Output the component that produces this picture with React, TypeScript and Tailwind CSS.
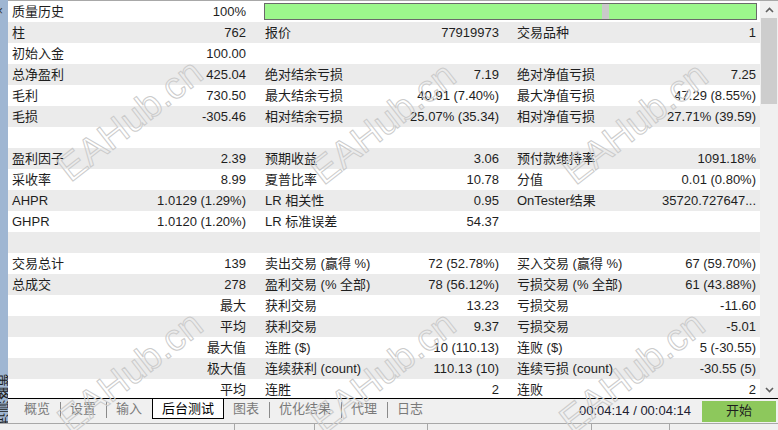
import React from 'react';

type Cell = [string, string] | null;

const rows: Cell[][] = [
  [['柱', '762'], ['报价', '77919973'], ['交易品种', '1']],
  [['初始入金', '100.00'], null, null],
  [['总净盈利', '425.04'], ['绝对结余亏损', '7.19'], ['绝对净值亏损', '7.25']],
  [['毛利', '730.50'], ['最大结余亏损', '40.91 (7.40%)'], ['最大净值亏损', '47.29 (8.55%)']],
  [['毛损', '-305.46'], ['相对结余亏损', '25.07% (35.34)'], ['相对净值亏损', '27.71% (39.59)']],
  [null, null, null],
  [['盈利因子', '2.39'], ['预期收益', '3.06'], ['预付款维持率', '1091.18%']],
  [['采收率', '8.99'], ['夏普比率', '10.78'], ['分值', '0.01 (0.80%)']],
  [['AHPR', '1.0129 (1.29%)'], ['LR 相关性', '0.95'], ['OnTester结果', '35720.727647...']],
  [['GHPR', '1.0120 (1.20%)'], ['LR 标准误差', '54.37'], null],
  [null, null, null],
  [['交易总计', '139'], ['卖出交易 (赢得 %)', '72 (52.78%)'], ['买入交易 (赢得 %)', '67 (59.70%)']],
  [['总成交', '278'], ['盈利交易 (% 全部)', '78 (56.12%)'], ['亏损交易 (% 全部)', '61 (43.88%)']],
  [['', '最大'], ['获利交易', '13.23'], ['亏损交易', '-11.60']],
  [['', '平均'], ['获利交易', '9.37'], ['亏损交易', '-5.01']],
  [['', '最大值'], ['连胜 ($)', '10 (110.13)'], ['连败 ($)', '5 (-30.55)']],
  [['', '极大值'], ['连续获利 (count)', '110.13 (10)'], ['连续亏损 (count)', '-30.55 (5)']],
  [['', '平均'], ['连胜', '2'], ['连败', '2']],
];

const pads = ['pl-[4px] pr-[12px]', 'pl-[7px] pr-[12px]', 'pl-[6px] pr-[4px]'];

const Chevron = ({ down }: { down?: boolean }) => (
  <svg width="9" height="6" viewBox="0 0 9 6">
    <polyline
      points={down ? '1,1 4.5,4.5 8,1' : '1,5 4.5,1.5 8,5'}
      fill="none"
      stroke="#606060"
      strokeWidth="1.6"
    />
  </svg>
);

const Tab = ({ label, first }: { label: string; first?: boolean }) => (
  <div className={`h-[20px] flex items-center ${first ? 'pl-[16px]' : 'pl-[9px]'} pr-[10px] text-[#7a7a7a]`}>
    {label}
  </div>
);

const Sep = () => <div className="w-px h-[16px] mt-[3px] bg-[#8a8a8a]" />;

const marks = [
  'left-[130px] top-[120px]',
  'left-[383px] top-[123px]',
  'left-[635px] top-[123px]',
  'left-[130px] top-[372px]',
  'left-[383px] top-[372px]',
  'left-[632px] top-[372px]',
];

export default function App() {
  return (
    <div className="relative w-[778px] h-[430px] overflow-hidden bg-[#f0f0f0] text-[13px] text-[#1e1e1e] font-['Liberation_Sans','Noto_Sans_CJK_SC',sans-serif]">
      <div className="flex h-[423px]">
        {/* left dock strip */}
        <div className="relative w-[8px] bg-[#9fb6d2] overflow-hidden">
          <span className="absolute -left-[4px] top-[2px] text-[12px] text-[#303030]">×</span>
          <span className="absolute left-[-24px] bottom-[14px] rotate-90 whitespace-nowrap text-[13px] text-[#202020]">
            策略测试
          </span>
        </div>

        <div className="flex-1 flex flex-col">
          <div className="flex h-[398px] border-t border-[#a8a8a8]">
            <div className="w-[752px] overflow-hidden bg-white">
              {/* row 1 */}
              <div className="grid grid-cols-[250px_502px] h-[21px] leading-[21px] bg-white">
                <div className={`flex justify-between ${pads[0]}`}>
                  <span>质量历史</span>
                  <span>100%</span>
                </div>
                <div className="pl-[6px] pr-[3px] pt-[2px]">
                  <div className="flex h-[17px] border border-[#6a6a6a] bg-[#9cf78c]">
                    <div className="w-[337px]" />
                    <div className="w-[7px] bg-[#c9c9c9]" />
                    <div className="flex-1" />
                  </div>
                </div>
              </div>
              {rows.map((r, i) => (
                <div
                  key={i}
                  className={`grid grid-cols-[250px_253px_249px] h-[21px] leading-[21px] ${
                    i % 2 === 0 ? 'bg-[#ebebeb]' : 'bg-white'
                  }`}
                >
                  {r.map((c, j) => (
                    <div key={j} className={`flex justify-between whitespace-nowrap ${pads[j]}`}>
                      <span>{c ? c[0] : ''}</span>
                      <span>{c ? c[1] : ''}</span>
                    </div>
                  ))}
                </div>
              ))}
            </div>

            {/* scrollbar */}
            <div className="w-[18px] flex flex-col bg-[#f0f0f0]">
              <div className="h-[17px] flex items-center justify-center">
                <Chevron />
              </div>
              <div className="px-[1px]">
                <div className="h-[86px] bg-[#cdcdcd]" />
              </div>
              <div className="flex-1" />
              <div className="h-[17px] flex items-center justify-center">
                <Chevron down />
              </div>
            </div>
          </div>

          {/* tab bar */}
          <div className="flex h-[25px] border-t border-black bg-[#f0f0f0]">
            <div className="flex items-start">
              <Tab label="概览" first />
              <Sep />
              <Tab label="设置" />
              <Sep />
              <Tab label="输入" />
              <div className="h-[20px] flex items-center px-[9px] bg-white border-x border-b border-black text-black">
                后台测试
              </div>
              <Tab label="图表" />
              <Sep />
              <Tab label="优化结果" />
              <Sep />
              <Tab label="代理" />
              <Sep />
              <Tab label="日志" />
            </div>
            <div className="ml-auto flex items-center">
              <span className="mr-[11px] text-[#202030]">00:04:14 / 00:04:14</span>
              <div className="w-[74px] h-[21px] mr-[2px] flex items-center justify-center bg-[#8dc85c] text-[#1e1e1e]">
                开始
              </div>
            </div>
          </div>
        </div>
      </div>

      {/* status strip */}
      <div className="flex h-[7px] border-t border-[#a8a8a8] bg-[#f0f0f0]">
        <div className="w-[235px] border-r border-[#a8a8a8]" />
        <div className="w-[80px] border-r border-[#a8a8a8]" />
        <div className="w-[113px] border-r border-[#a8a8a8]" />
        <div className="w-[164px] border-r border-[#a8a8a8]" />
        <div className="w-[78px] border-r border-[#a8a8a8]" />
        <div className="flex-1" />
      </div>

      {/* watermark */}
      {marks.map((m, i) => (
        <span
          key={i}
          className={`pointer-events-none absolute ${m} -translate-x-1/2 -translate-y-1/2 -rotate-[38deg] whitespace-nowrap font-['Liberation_Sans',sans-serif] text-[38px] leading-none text-transparent [-webkit-text-stroke:1px_#cbcbcb]`}
        >
          EAHub.cn
        </span>
      ))}
    </div>
  );
}
